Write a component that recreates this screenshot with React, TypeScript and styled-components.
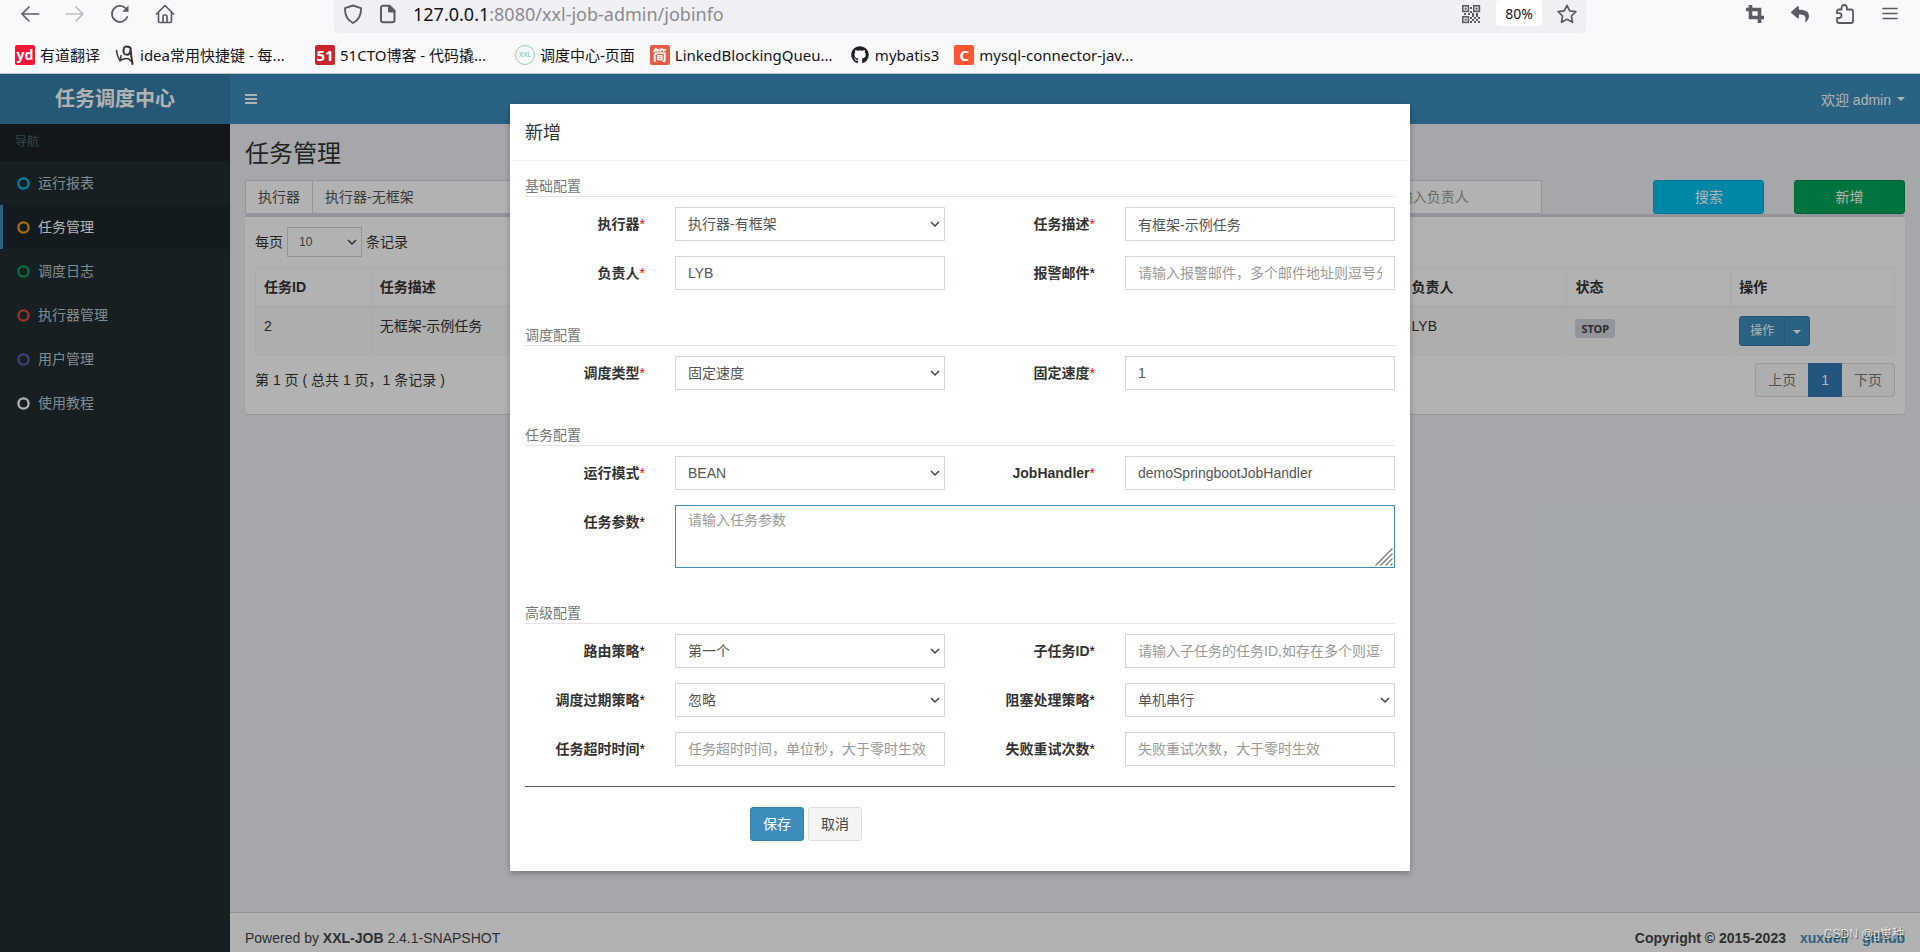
import React, { useId } from 'react';
import styled, { createGlobalStyle, css } from 'styled-components';
import { FaGithub, FaReply } from 'react-icons/fa';

const Global = createGlobalStyle`
  *, *::before, *::after { box-sizing: border-box; }
  html, body { margin: 0; padding: 0; }
  body {
    font-family: "Liberation Sans", "Noto Sans CJK SC", sans-serif;
    font-size: 14px;
    line-height: 20px;
    color: #333;
    background: #ecf0f5;
  }
  button, input, select, textarea { font-family: inherit; margin: 0; }
  a { text-decoration: none; color: inherit; }
`;

const Page = styled.div`
  display: flex;
  flex-direction: column;
  min-height: 100vh;
`;

/* ---------- browser chrome ---------- */

const Chrome = styled.header`
  background: #f9f9fb;
  border-bottom: 1px solid #c2c2c6;
  color: #15141a;
  font-family: "Noto Sans", "Noto Sans CJK SC", sans-serif;
`;

const Toolbar = styled.div`
  display: flex;
  align-items: flex-start;
  justify-content: space-between;
  padding: 0 20px;
`;

const IconGroup = styled.div`
  display: flex;
  align-items: center;
  gap: 25px;
  height: 28px;
`;

const IconButton = styled.button<{ $dim?: boolean }>`
  display: flex;
  align-items: center;
  justify-content: center;
  width: 20px;
  height: 20px;
  padding: 0;
  border: 0;
  background: none;
  color: ${(p) => (p.$dim ? '#bdbdc1' : '#5b5b66')};
`;

const AddressBar = styled.div`
  display: flex;
  align-items: center;
  gap: 15px;
  flex: 1;
  height: 33px;
  margin: 0 159px;
  padding: 0 9px 5px;
  background: #f0f0f4;
  border-radius: 0 0 4px 4px;
`;

const Url = styled.div`
  flex: 1;
  font-size: 18px;
  color: #8b8a91;
  b { font-weight: 400; color: #15141a; }
`;

const ZoomLevel = styled.button`
  width: 46px;
  height: 26px;
  padding: 0;
  border: 0;
  border-radius: 4px;
  background: #fff;
  color: #15141a;
  font-size: 14px;
  align-self: flex-start;
`;

const Bookmarks = styled.nav`
  display: flex;
  align-items: center;
  gap: 15px;
  height: 40px;
  padding: 4px 15px 0;
`;

const Bookmark = styled.a<{ $clipped?: boolean }>`
  display: flex;
  align-items: center;
  gap: 5px;
  font-size: 15px;
  white-space: nowrap;
  ${(p) => p.$clipped && css`width: 185px;`}
`;

const Favicon = styled.span<{ $bg?: string; $size?: number; $round?: boolean; $ink?: string }>`
  display: flex;
  align-items: center;
  justify-content: center;
  flex: none;
  width: 20px;
  height: 20px;
  border-radius: ${(p) => (p.$round ? '10px' : '2px')};
  border: ${(p) => (p.$round ? '1px solid #8fd0b4' : '0')};
  background: ${(p) => p.$bg ?? 'transparent'};
  color: ${(p) => p.$ink ?? '#fff'};
  font-size: ${(p) => p.$size ?? 14}px;
  font-weight: ${(p) => (p.$round ? 400 : 700)};
  line-height: 20px;
`;

/* ---------- admin application ---------- */

const Admin = styled.div`
  position: relative;
  display: flex;
  flex: 1;
`;

const Sidebar = styled.aside`
  display: flex;
  flex-direction: column;
  flex: none;
  width: 230px;
  background: #222d32;
`;

const Logo = styled.a`
  height: 50px;
  background: #367fa9;
  color: #fff;
  font-size: 20px;
  font-weight: 700;
  line-height: 50px;
  text-align: center;
`;

const NavHeading = styled.div`
  padding: 10px 15px;
  background: #1a2226;
  color: #4b646f;
  font-size: 12px;
  line-height: 17px;
`;

const NavLink = styled.a<{ $active?: boolean }>`
  display: flex;
  align-items: center;
  gap: 8px;
  height: 44px;
  padding-left: 14px;
  border-left: 3px solid ${(p) => (p.$active ? '#3c8dbc' : 'transparent')};
  background: ${(p) => (p.$active ? '#1e282c' : 'transparent')};
  color: ${(p) => (p.$active ? '#fff' : '#b8c7ce')};
`;

const Main = styled.div`
  display: flex;
  flex-direction: column;
  flex: 1;
  min-width: 0;
`;

const Navbar = styled.div`
  display: flex;
  align-items: center;
  justify-content: space-between;
  height: 50px;
  padding: 0 15px;
  background: #3c8dbc;
  color: #fff;
`;

const NavbarButton = styled.button`
  display: flex;
  align-items: center;
  gap: 6px;
  padding: 0;
  border: 0;
  background: none;
  color: #fff;
  font-size: 14px;
`;

const Content = styled.main`
  flex: 1;
  padding: 15px;
`;

const PageTitle = styled.h1`
  margin: 0 0 11px;
  font-size: 24px;
  font-weight: 400;
  line-height: 30px;
`;

const Grid = styled.div`
  display: grid;
  grid-template-columns: repeat(12, minmax(0, 1fr));
  column-gap: 30px;
`;

const Cell = styled.div<{ $start?: number; $span: number }>`
  grid-column: ${(p) => p.$start ?? 'auto'} / span ${(p) => p.$span};
`;

const InputGroup = styled.div`
  display: flex;
`;

const Addon = styled.label`
  flex: none;
  height: 34px;
  padding: 6px 12px;
  border: 1px solid #d2d6de;
  border-right: 0;
  background: #fff;
  color: #555;
`;

const controlStyle = css`
  display: block;
  width: 100%;
  height: 34px;
  padding: 6px 12px;
  border: 1px solid #d2d6de;
  border-radius: 0;
  outline: 0;
  background: #fff;
  color: #555;
  font-size: 14px;
  line-height: 20px;
  &::placeholder { color: #999; opacity: 1; }
`;

const TextInput = styled.input`${controlStyle}`;

const OwnerInput = styled(TextInput)`
  width: 170px;
`;

const TextArea = styled.textarea`
  ${controlStyle}
  height: 63px;
  padding: 4px 12px;
  border-color: #3c8dbc;
  resize: none;
`;

const SelectBox = styled.div<{ $small?: boolean }>`
  position: relative;
  flex: ${(p) => (p.$small ? 'none' : 1)};
  width: ${(p) => (p.$small ? '75px' : 'auto')};
  > svg {
    position: absolute;
    right: 5px;
    top: 50%;
    margin-top: -3px;
    pointer-events: none;
  }
`;

const NativeSelect = styled.select<{ $small?: boolean }>`
  ${controlStyle}
  appearance: none;
  ${(p) => p.$small && css`
    height: 30px;
    padding: 5px 11px;
    font-size: 12px;
    line-height: 18px;
  `}
`;

const AreaBox = styled.div`
  position: relative;
  > svg {
    position: absolute;
    right: 2px;
    bottom: 2px;
    pointer-events: none;
  }
`;

const tones = {
  info: ['#00c0ef', '#00acd6', '#fff'],
  success: ['#00a65a', '#008d4c', '#fff'],
  primary: ['#3c8dbc', '#367fa9', '#fff'],
  plain: ['#f4f4f4', '#ddd', '#444'],
};

const Button = styled.button<{ $tone: keyof typeof tones; $block?: boolean; $small?: boolean }>`
  width: ${(p) => (p.$block ? '100%' : 'auto')};
  padding: ${(p) => (p.$small ? '5px 10px' : '6px 12px')};
  border: 1px solid ${(p) => tones[p.$tone][1]};
  border-radius: 3px;
  background: ${(p) => tones[p.$tone][0]};
  color: ${(p) => tones[p.$tone][2]};
  font-size: ${(p) => (p.$small ? 12 : 14)}px;
  line-height: ${(p) => (p.$small ? 18 : 20)}px;
`;

const ButtonGroup = styled.div`
  display: flex;
  > button:first-child { border-radius: 3px 0 0 3px; }
  > button + button { margin-left: -1px; padding: 5px 8px; border-radius: 0 3px 3px 0; }
`;

const Caret = styled.span`
  display: inline-block;
  border-top: 4px solid currentColor;
  border-left: 4px solid transparent;
  border-right: 4px solid transparent;
  vertical-align: middle;
`;

const Box = styled.section`
  padding: 10px 10px 17px;
  border-top: 3px solid #d2d6de;
  border-radius: 3px;
  background: #fff;
  box-shadow: 0 1px 1px rgba(0, 0, 0, 0.1);
`;

const LengthRow = styled.label`
  display: flex;
  align-items: center;
  gap: 4px;
`;

const Table = styled.table`
  width: 100%;
  margin: 11px 0 8px;
  table-layout: fixed;
  border: 1px solid #f4f4f4;
  border-collapse: separate;
  border-spacing: 0;
  th, td { padding: 8px; text-align: left; vertical-align: top; }
  th + th, td + td { border-left: 1px solid #f4f4f4; }
  th { border-bottom: 2px solid #f4f4f4; }
  td { border-top: 1px solid #f4f4f4; background: #f9f9f9; }
`;

const Col = styled.col<{ $share?: number }>`
  width: ${(p) => (p.$share ? `${p.$share}%` : 'auto')};
`;

const Tag = styled.span`
  display: block;
  width: max-content;
  margin-top: 3px;
  padding: 0 6px;
  border-radius: 3px;
  background: #d2d6de;
  color: #444;
  font-family: "Noto Sans", sans-serif;
  font-size: 11px;
  font-weight: 700;
  line-height: 19px;
`;

const TableFoot = styled.div`
  display: flex;
  align-items: center;
  justify-content: space-between;
`;

const Pager = styled.nav`
  display: flex;
`;

const PagerButton = styled.button<{ $active?: boolean }>`
  height: 34px;
  padding: 6px 12px;
  border: 1px solid ${(p) => (p.$active ? '#337ab7' : '#ddd')};
  background: ${(p) => (p.$active ? '#337ab7' : '#fafafa')};
  color: ${(p) => (p.$active ? '#fff' : '#777')};
  font-size: 14px;
  line-height: 20px;
  &:first-child { border-right: 0; border-radius: 4px 0 0 4px; }
  &:last-child { border-left: 0; border-radius: 0 4px 4px 0; }
`;

const Footer = styled.footer`
  position: relative;
  display: flex;
  justify-content: space-between;
  padding: 15px 15px 4px;
  border-top: 1px solid #d2d6de;
  background: #fff;
  color: #444;
`;

const Credits = styled.div`
  display: flex;
  gap: 14px;
  font-weight: 700;
  a { color: #3c8dbc; }
`;

const Watermark = styled.div`
  position: absolute;
  right: 16px;
  bottom: 8px;
  color: rgba(255, 255, 255, 0.75);
  font-size: 12px;
  text-shadow: 1px 1px 1px rgba(0, 0, 0, 0.5);
`;

/* ---------- modal ---------- */

const Backdrop = styled.div`
  position: absolute;
  inset: 0;
  display: flex;
  align-items: flex-start;
  justify-content: center;
  padding-top: 30px;
  background: rgba(0, 0, 0, 0.3);
`;

const Dialog = styled.div`
  width: 100%;
  max-width: 900px;
  background: #fff;
  box-shadow: 0 2px 6px rgba(0, 0, 0, 0.3);
`;

const DialogTitle = styled.h2`
  margin: 0;
  padding: 16px 15px 14px;
  border-bottom: 1px solid #f4f4f4;
  font-size: 18px;
  font-weight: 400;
  line-height: 26px;
`;

const DialogForm = styled.form`
  padding: 15px 15px 30px;
`;

const FieldSet = styled.fieldset`
  min-width: 0;
  margin: 0 0 35px;
  padding: 0;
  border: 0;
  &:last-of-type { margin-bottom: 20px; }
`;

const Legend = styled.legend`
  width: 100%;
  margin-bottom: 10px;
  padding: 0;
  border-bottom: 1px solid #e5e5e5;
  color: #777;
`;

const FieldGrid = styled(Grid)`
  row-gap: 15px;
`;

const FieldLabel = styled.label`
  grid-column: span 2;
  padding-top: 7px;
  font-weight: 700;
  text-align: right;
  white-space: nowrap;
`;

const Star = styled.span<{ $required?: boolean }>`
  color: ${(p) => (p.$required ? '#f00' : '#000')};
  font-weight: 400;
`;

const Actions = styled(Grid)`
  padding-top: 20px;
  border-top: 1px solid #555;
`;

const ActionButtons = styled(Cell)`
  display: flex;
  gap: 4px;
`;

/* ---------- drawings ---------- */

const Line = ({ children, width = 2 }: { children: React.ReactNode; width?: number }) => (
  <svg width="20" height="20" viewBox="0 0 20 20" fill="none" stroke="currentColor"
    strokeWidth={width} strokeLinecap="round" strokeLinejoin="round">{children}</svg>
);

const ArrowLeft = () => <Line width={1.7}><path d="M18.500 10H2M9 3 2 10l7 7" /></Line>;
const ArrowRight = () => <Line width={1.7}><path d="M1.500 10H18M11 3l7 7-7 7" /></Line>;
const Reload = () => (
  <Line width={1.8}>
    <path d="M17.300 13A8 8 0 1 1 15.500 4.200L17 5.700" />
    <path d="M18.500 1.500v6.300h-6.300z" fill="currentColor" stroke="none" />
  </Line>
);
const Home = () => <Line width={1.7}><path d="M1.500 10 10 1.500 18.500 10M3.500 8.500V17q0 1.500 1.500 1.500h10q1.500 0 1.500-1.500V8.500M8 18v-5.500q0-1.500 1.500-1.500h1q1.500 0 1.500 1.500V18" /></Line>;
const Shield = () => <Line width={1.9}><path d="M10 1.500 18 4.200C18.300 11 15 16.500 10 19 5 16.500 1.700 11 2 4.200Z" /></Line>;
const FileIcon = () => (
  <Line width={2}>
    <path d="M4.500 1.800h7l5 5V16q0 2.200-2.200 2.200H5.200Q3 18.200 3 16V4q0-2.200 2.200-2.200z" />
    <path d="M11 2v5.500h5.500z" fill="currentColor" />
  </Line>
);
const StarIcon = () => <Line width={1.7}><path d="m10 1.300 2.700 5.600 6.200.8-4.500 4.300 1.100 6.300L10 15.300l-5.500 3 1.100-6.300L1.100 7.700l6.200-.8z" /></Line>;
const Puzzle = () => <Line width={1.8}><path d="M6.500 5.500V4q0-3 2.700-3t2.700 3v1.500H16q2 0 2 2V17q0 2-2 2H4q-2 0-2-2v-3h2q2.500 0 2.500-2.400T4 9.200H2V7.500q0-2 2-2z" /></Line>;
const MenuIcon = () => <Line width={1.5}><path d="M3 4.500h14M3 9.500h14M3 14.500h14" /></Line>;
const CropIcon = () => (
  <svg width="20" height="20" viewBox="0 0 20 20" fill="none" stroke="currentColor" strokeWidth="3.600">
    <path d="M5.500 1v12.500H19M1 5.500h13.500V19" />
  </svg>
);

const qrDots = [[11, 11], [15, 11], [13, 13], [17, 13], [11, 15], [15, 15], [13, 17], [17, 17], [9, 3], [9, 7], [3, 9], [7, 9], [11, 9], [15, 9], [9, 13], [9, 17]];
const QrCode = () => (
  <svg width="20" height="20" viewBox="0 0 20 20" fill="currentColor">
    {[[1, 1], [12, 1], [1, 12]].map(([x, y]) => (
      <g key={`${x}-${y}`}>
        <rect x={x + 0.8} y={y + 0.8} width="5.600" height="5.600" fill="none" stroke="currentColor" strokeWidth="1.600" />
        <rect x={x + 2.6} y={y + 2.6} width="2" height="2" />
      </g>
    ))}
    {qrDots.map(([x, y]) => <rect key={`${x}.${y}`} x={x} y={y} width="2" height="2" />)}
  </svg>
);

const Squiggle = () => (
  <svg width="20" height="20" viewBox="0 0 20 20" fill="none" stroke="#333" strokeLinecap="round">
    <path d="M1.500 5.500q.5 6 3.500 10 1-2 1-5" strokeWidth="1.500" />
    <path d="M15 2.500Q9-.5 8.500 5t5 4.500q2.500-2 2-7 .5 9 2 16.500" strokeWidth="2" />
    <path d="M5 15.500q6-3 9-1.500l3 3" strokeWidth="1.500" />
  </svg>
);

const Bars = () => (
  <svg width="12" height="12" viewBox="0 0 12 12" fill="currentColor">
    <path d="M0 1h12v2H0zM0 5h12v2H0zM0 9h12v2H0z" />
  </svg>
);

const Ring = ({ color }: { color: string }) => (
  <svg width="13" height="13" viewBox="0 0 13 13" fill="none" stroke={color} strokeWidth="2.300">
    <circle cx="6.500" cy="6.500" r="5.100" />
  </svg>
);

const Chevron = () => (
  <svg width="10" height="7" viewBox="0 0 10 7" fill="none" stroke="#444" strokeWidth="1.500">
    <path d="m1 1 4 4 4-4" />
  </svg>
);

const Grip = () => (
  <svg width="18" height="18" viewBox="0 0 18 18" fill="none" stroke="#777" strokeWidth="1.300">
    <path d="M.5 17.500l17-17M5.500 17.500l12-12M10.500 17.500l7-7M15.500 17.500l2-2" />
  </svg>
);

/* ---------- parts ---------- */

type SelectProps = { id?: string; value: string; small?: boolean; label?: string };

const Select = ({ id, value, small, label }: SelectProps) => (
  <SelectBox $small={small}>
    <NativeSelect id={id} $small={small} defaultValue={value} aria-label={label}>
      <option>{value}</option>
    </NativeSelect>
    <Chevron />
  </SelectBox>
);

type FieldProps = {
  label: string;
  required?: boolean;
  kind?: 'text' | 'select' | 'area';
  value?: string;
  hint?: string;
};

const Field = ({ label, required, kind = 'text', value = '', hint }: FieldProps) => {
  const id = useId();
  return (
    <>
      <FieldLabel htmlFor={id}>{label}<Star $required={required}>*</Star></FieldLabel>
      <Cell $span={kind === 'area' ? 10 : 4}>
        {kind === 'select' && <Select id={id} value={value} />}
        {kind === 'text' && <TextInput id={id} defaultValue={value} placeholder={hint} />}
        {kind === 'area' && <AreaBox><TextArea id={id} placeholder={hint} /><Grip /></AreaBox>}
      </Cell>
    </>
  );
};

const sections: { title: string; fields: FieldProps[] }[] = [
  {
    title: '基础配置',
    fields: [
      { label: '执行器', required: true, kind: 'select', value: '执行器-有框架' },
      { label: '任务描述', required: true, value: '有框架-示例任务' },
      { label: '负责人', required: true, value: 'LYB' },
      { label: '报警邮件', hint: '请输入报警邮件，多个邮件地址则逗号分隔' },
    ],
  },
  {
    title: '调度配置',
    fields: [
      { label: '调度类型', required: true, kind: 'select', value: '固定速度' },
      { label: '固定速度', required: true, value: '1' },
    ],
  },
  {
    title: '任务配置',
    fields: [
      { label: '运行模式', required: true, kind: 'select', value: 'BEAN' },
      { label: 'JobHandler', required: true, value: 'demoSpringbootJobHandler' },
      { label: '任务参数', kind: 'area', hint: '请输入任务参数' },
    ],
  },
  {
    title: '高级配置',
    fields: [
      { label: '路由策略', kind: 'select', value: '第一个' },
      { label: '子任务ID', hint: '请输入子任务的任务ID,如存在多个则逗号分隔' },
      { label: '调度过期策略', kind: 'select', value: '忽略' },
      { label: '阻塞处理策略', kind: 'select', value: '单机串行' },
      { label: '任务超时时间', hint: '任务超时时间，单位秒，大于零时生效' },
      { label: '失败重试次数', hint: '失败重试次数，大于零时生效' },
    ],
  },
];

const menu = [
  { text: '运行报表', color: '#00c0ef' },
  { text: '任务管理', color: '#f39c12', active: true },
  { text: '调度日志', color: '#00a65a' },
  { text: '执行器管理', color: '#dd4b39' },
  { text: '用户管理', color: '#605ca8' },
  { text: '使用教程', color: '#fff' },
];

const BrowserChrome = () => (
  <Chrome>
    <Toolbar>
      <IconGroup>
        <IconButton aria-label="后退"><ArrowLeft /></IconButton>
        <IconButton aria-label="前进" $dim><ArrowRight /></IconButton>
        <IconButton aria-label="刷新"><Reload /></IconButton>
        <IconButton aria-label="主页"><Home /></IconButton>
      </IconGroup>
      <AddressBar>
        <IconButton aria-label="跟踪保护"><Shield /></IconButton>
        <IconButton aria-label="网站信息"><FileIcon /></IconButton>
        <Url><b>127.0.0.1</b>:8080/xxl-job-admin/jobinfo</Url>
        <IconButton aria-label="二维码"><QrCode /></IconButton>
        <ZoomLevel>80%</ZoomLevel>
        <IconButton aria-label="收藏"><StarIcon /></IconButton>
      </AddressBar>
      <IconGroup>
        <IconButton aria-label="截图"><CropIcon /></IconButton>
        <IconButton aria-label="撤销"><FaReply size={18} /></IconButton>
        <IconButton aria-label="扩展"><Puzzle /></IconButton>
        <IconButton aria-label="菜单"><MenuIcon /></IconButton>
      </IconGroup>
    </Toolbar>
    <Bookmarks>
      <Bookmark href="#"><Favicon $bg="#fa1536">yd</Favicon>有道翻译</Bookmark>
      <Bookmark href="#" $clipped><Favicon><Squiggle /></Favicon>idea常用快捷键 - 每...</Bookmark>
      <Bookmark href="#" $clipped><Favicon $bg="#c9252d" $size={15}>51</Favicon>51CTO博客 - 代码撬...</Bookmark>
      <Bookmark href="#"><Favicon $round $size={7} $ink="#6fc3a0">XXL</Favicon>调度中心-页面</Bookmark>
      <Bookmark href="#" $clipped><Favicon $bg="#e65a46">简</Favicon>LinkedBlockingQueu...</Bookmark>
      <Bookmark href="#"><Favicon $ink="#1b1f23"><FaGithub size={18} /></Favicon>mybatis3</Bookmark>
      <Bookmark href="#" $clipped><Favicon $bg="#fc5531" $size={15}>C</Favicon>mysql-connector-jav...</Bookmark>
    </Bookmarks>
  </Chrome>
);

const JobDialog = () => (
  <Backdrop>
    <Dialog role="dialog" aria-labelledby="dialog-title">
      <DialogTitle id="dialog-title">新增</DialogTitle>
      <DialogForm onSubmit={(e) => e.preventDefault()}>
        {sections.map((section) => (
          <FieldSet key={section.title}>
            <Legend>{section.title}</Legend>
            <FieldGrid>
              {section.fields.map((field) => <Field key={field.label} {...field} />)}
            </FieldGrid>
          </FieldSet>
        ))}
        <Actions>
          <ActionButtons $start={4} $span={6}>
            <Button $tone="primary" type="submit">保存</Button>
            <Button $tone="plain" type="button">取消</Button>
          </ActionButtons>
        </Actions>
      </DialogForm>
    </Dialog>
  </Backdrop>
);

export default function App() {
  return (
    <Page>
      <Global />
      <BrowserChrome />
      <Admin>
        <Sidebar>
          <Logo href="#">任务调度中心</Logo>
          <NavHeading>导航</NavHeading>
          {menu.map((item) => (
            <NavLink key={item.text} href="#" $active={item.active}>
              <Ring color={item.color} />{item.text}
            </NavLink>
          ))}
        </Sidebar>
        <Main>
          <Navbar>
            <NavbarButton aria-label="切换菜单"><Bars /></NavbarButton>
            <NavbarButton>欢迎 admin<Caret /></NavbarButton>
          </Navbar>
          <Content>
            <PageTitle>任务管理</PageTitle>
            <Grid>
              <Cell $span={3}>
                <InputGroup>
                  <Addon htmlFor="executor">执行器</Addon>
                  <Select id="executor" value="执行器-无框架" />
                </InputGroup>
              </Cell>
              <Cell $start={9} $span={2}>
                <OwnerInput placeholder="请输入负责人" aria-label="负责人" />
              </Cell>
              <Cell $span={1}><Button $tone="info" $block>搜索</Button></Cell>
              <Cell $span={1}><Button $tone="success" $block>新增</Button></Cell>
            </Grid>
            <Box>
              <LengthRow>每页<Select value="10" small />条记录</LengthRow>
              <Table>
                <colgroup>
                  <Col $share={7} /><Col /><Col $share={10} /><Col $share={10} /><Col $share={10} />
                </colgroup>
                <thead>
                  <tr><th>任务ID</th><th>任务描述</th><th>负责人</th><th>状态</th><th>操作</th></tr>
                </thead>
                <tbody>
                  <tr>
                    <td>2</td>
                    <td>无框架-示例任务</td>
                    <td>LYB</td>
                    <td><Tag>STOP</Tag></td>
                    <td>
                      <ButtonGroup>
                        <Button $tone="primary" $small>操作</Button>
                        <Button $tone="primary" $small aria-label="更多操作"><Caret /></Button>
                      </ButtonGroup>
                    </td>
                  </tr>
                </tbody>
              </Table>
              <TableFoot>
                <span>第 1 页 ( 总共 1 页，1 条记录 )</span>
                <Pager>
                  <PagerButton>上页</PagerButton>
                  <PagerButton $active>1</PagerButton>
                  <PagerButton>下页</PagerButton>
                </Pager>
              </TableFoot>
            </Box>
          </Content>
          <Footer>
            <span>Powered by <b>XXL-JOB</b> 2.4.1-SNAPSHOT</span>
            <Credits>
              <span>Copyright © 2015-2023</span>
              <a href="#">xuxueli</a>
              <a href="#">github</a>
            </Credits>
          </Footer>
        </Main>
        <JobDialog />
        <Watermark>CSDN @g崽种</Watermark>
      </Admin>
    </Page>
  );
}
